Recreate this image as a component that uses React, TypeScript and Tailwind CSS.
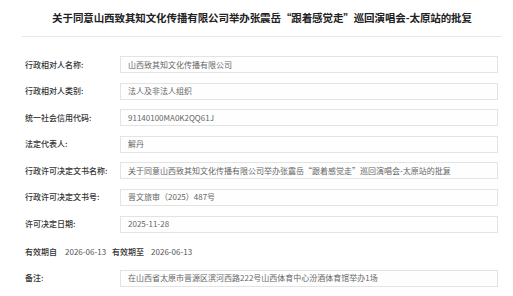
import React from "react";

const rows: [string, string][] = [
  ["行政相对人名称:", "山西致其知文化传播有限公司"],
  ["行政相对人类别:", "法人及非法人组织"],
  ["统一社会信用代码:", "91140100MA0K2QQ61J"],
  ["法定代表人:", "解丹"],
  ["行政许可决定文书名称:", "关于同意山西致其知文化传播有限公司举办张震岳“跟着感觉走”巡回演唱会-太原站的批复"],
  ["行政许可决定文书号:", "晋文旅审（2025）487号"],
  ["许可决定日期:", "2025-11-28"],
];

function Row({ label, value }: { label: string; value: string }) {
  return (
    <div className="flex items-center h-[17px]">
      <div className="w-[95px] shrink-0 text-[8px] font-medium text-[#333]">{label}</div>
      <div className="w-[378px] h-[17px] border border-[#e3e3e3] bg-[#fefefe] flex items-center pl-[7px] text-[8px] text-[#666] whitespace-nowrap overflow-hidden">
        {value}
      </div>
    </div>
  );
}

export default function App() {
  return (
    <div
      className="w-[513px] h-[296px] bg-white overflow-hidden"
      style={{ fontFamily: '"Noto Sans CJK SC", "Noto Sans", sans-serif' }}
    >
      <div className="mx-[22px] w-[480px] h-[37px] border-b border-[#e8e8e8] flex items-center justify-center">
        <div className="text-[10.5px] font-bold text-[#222] whitespace-nowrap tracking-[-0.1px]">
          关于同意山西致其知文化传播有限公司举办张震岳“跟着感觉走”巡回演唱会-太原站的批复
        </div>
      </div>
      <div className="pl-[25px] pt-[19px] flex flex-col gap-[9.6px]">
        {rows.map(([l, v]) => (
          <Row key={l} label={l} value={v} />
        ))}
        <div className="flex items-center h-[17px] mt-[1px] text-[8px] whitespace-nowrap">
          <span className="font-medium text-[#333]">有效期自</span>
          <span className="ml-[8px] text-[#555]">2026-06-13</span>
          <span className="ml-[6px] font-medium text-[#333]">有效期至</span>
          <span className="ml-[7px] text-[#555]">2026-06-13</span>
        </div>
        <Row label="备注:" value="在山西省太原市晋源区滨河西路222号山西体育中心汾酒体育馆举办1场" />
      </div>
    </div>
  );
}
